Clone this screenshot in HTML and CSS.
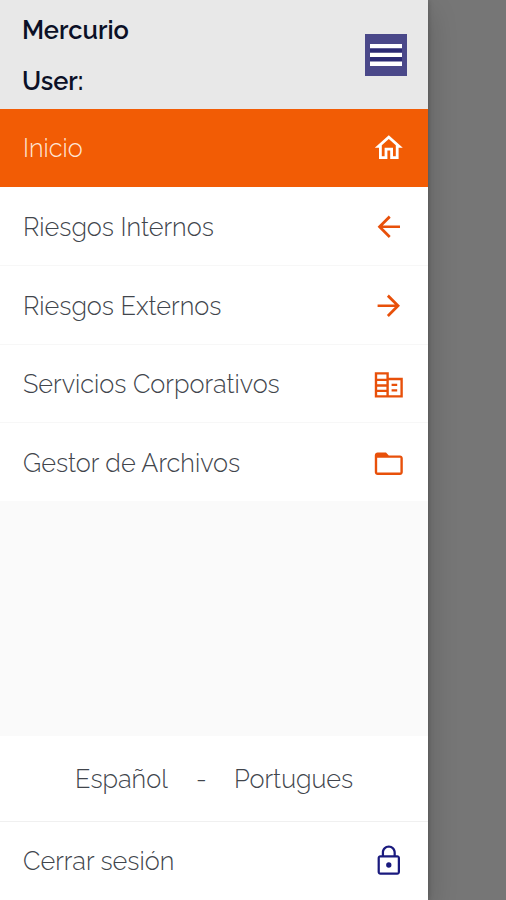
FILE: index.html
```
<!DOCTYPE html>
<html lang="es">

<head>
  <meta charset="UTF-8" />
  <meta name="viewport" content="width=device-width, initial-scale=1.0" />
  <title>Mercurio</title>
  <link rel="stylesheet" href="styles.css">
</head>

<body>
  <aside class="drawer">
    <header class="header">
      <div class="user">
        <p>Mercurio</p>
        <p>User:</p>
      </div>
      <button class="toggle" aria-label="Menu">
        <svg viewBox="0 0 42 42">
          <path class="shade" d="M5 14h32v14H5z" />
          <path class="bars" d="M5 10h32v4.3H5zM5 18.8h32v4.3H5zM5 27.6h32v4.3H5z" />
        </svg>
      </button>
    </header>

    <nav class="menu">
      <a class="item active">
        <span>Inicio</span>
        <svg class="icon" viewBox="0 0 24 24"><path d="M12 5.69l5 4.5V18h-2v-6H9v6H7v-7.81l5-4.5M12 3L2 12h3v8h6v-6h2v6h6v-8h3L12 3z" /></svg>
      </a>
      <a class="item">
        <span>Riesgos Internos</span>
        <svg class="icon" viewBox="0 0 24 24"><path d="M20 11.1H7.7l5.65-5.65L12 4l-8 8 8 8 1.35-1.45L7.7 12.9H20z" /></svg>
      </a>
      <a class="item">
        <span>Riesgos Externos</span>
        <svg class="icon" viewBox="0 0 24 24"><path d="M12 4l-1.35 1.45 5.65 5.65H4v1.8h12.3l-5.65 5.65L12 20l8-8z" /></svg>
      </a>
      <a class="item">
        <span>Servicios Corporativos</span>
        <svg class="icon" viewBox="0 0 24 24"><path fill-rule="evenodd" d="M12 7V3H2v18h20V7H12zM10.3 19.4H3.7v-2.2h6.6v2.2zm0-3.8H3.7v-2.2h6.6v2.2zm0-4H3.7V9.2h6.6v2.4zm0-4H3.7V4.7h6.6v2.9zm10 11.8H12V8.7h8.3v10.7zM14 11.2h4v1.6h-4zM14 15.2h4v1.6h-4z" /></svg>
      </a>
      <a class="item">
        <span>Gestor de Archivos</span>
        <svg class="icon" viewBox="0 0 24 24"><path fill-rule="evenodd" d="M20 6h-8l-2-2H4c-1.1 0-2 .9-2 2v12c0 1.1.9 2 2 2h16c1.1 0 2-.9 2-2V8c0-1.1-.9-2-2-2zm.3 12.3H3.7V7.7h16.6v10.6z" /></svg>
      </a>
    </nav>

    <footer class="footer">
      <div class="langs">
        <a class="espanol">Español</a>
        <span class="dash">-</span>
        <a>Portugues</a>
      </div>
      <a class="item logout">
        <span>Cerrar sesión</span>
        <svg class="icon" viewBox="0 0 24 24"><path fill-rule="evenodd" d="M18 8h-1V6c0-2.76-2.24-5-5-5S7 3.24 7 6v2H6c-1.1 0-2 .9-2 2v10c0 1.1.9 2 2 2h12c1.1 0 2-.9 2-2V10c0-1.1-.9-2-2-2zM8.6 6c0-1.9 1.5-3.4 3.4-3.4s3.4 1.5 3.4 3.4v2H8.6V6zm9.8 14.4H5.6V9.6h12.8v10.8zM12 16.9a1.9 1.9 0 1 0 0-3.8 1.9 1.9 0 0 0 0 3.8z" /></svg>
      </a>
    </footer>
  </aside>
</body>

</html>
```

FILE: styles.css
```
* {
  box-sizing: border-box;
}

body {
  margin: 0;
  height: 900px;
  overflow: hidden;
  background-color: #767676;
  font-family: Raleway, Lato, sans-serif;
  font-size: 25.3px;
  font-weight: 300;
  color: #41454c;
}

p {
  margin: 0;
}

.drawer {
  display: flex;
  flex-direction: column;
  width: 428px;
  height: 900px;
  background-color: #fafafa;
  box-shadow: 0 12px 28px rgba(0, 0, 0, .2), 0 0 5px rgba(0, 0, 0, .25);
}

.header {
  display: flex;
  justify-content: space-between;
  align-items: center;
  height: 109px;
  padding: 0 21px 0 22px;
  background-color: #e8e8e8;
}

.user {
  padding-top: 2px;
  font-size: 25.4px;
  font-weight: 600;
  line-height: 51px;
  color: #0b1026;
}

.toggle {
  width: 42px;
  height: 42px;
  padding: 0;
  border: 0;
  background-color: #4a4889;
}

.toggle svg {
  display: block;
}

.toggle .shade {
  fill: #2b2a74;
}

.toggle .bars {
  fill: #fff;
}

.item {
  display: flex;
  justify-content: space-between;
  align-items: center;
  height: 78.8px;
  padding: 2px 23px 0;
  border-bottom: 1px solid #f7f7f7;
  background-color: #fff;
  white-space: nowrap;
}

.item:last-child {
  height: 78px;
  border-bottom: 0;
}

.active {
  height: 78px;
  padding-top: 0;
  border-bottom: 0;
  background-color: #f25c05;
  color: #ffe6d6;
}

.icon {
  flex: none;
  width: 33.6px;
  height: 33.6px;
  fill: #e8500a;
}

.item .icon {
  margin-right: -1px;
}

.active .icon {
  fill: #fff;
}

.footer {
  margin-top: auto;
}

.langs {
  display: flex;
  align-items: center;
  height: 86px;
  padding: 0 0 0 75px;
  border-bottom: 1px solid #f0f0f0;
  background-color: #fff;
}

.espanol {
  width: 121px;
}

.dash {
  width: 38px;
}

.logout {
  padding-top: 0;
}

.logout .icon {
  fill: #1a1a7e;
}
```
